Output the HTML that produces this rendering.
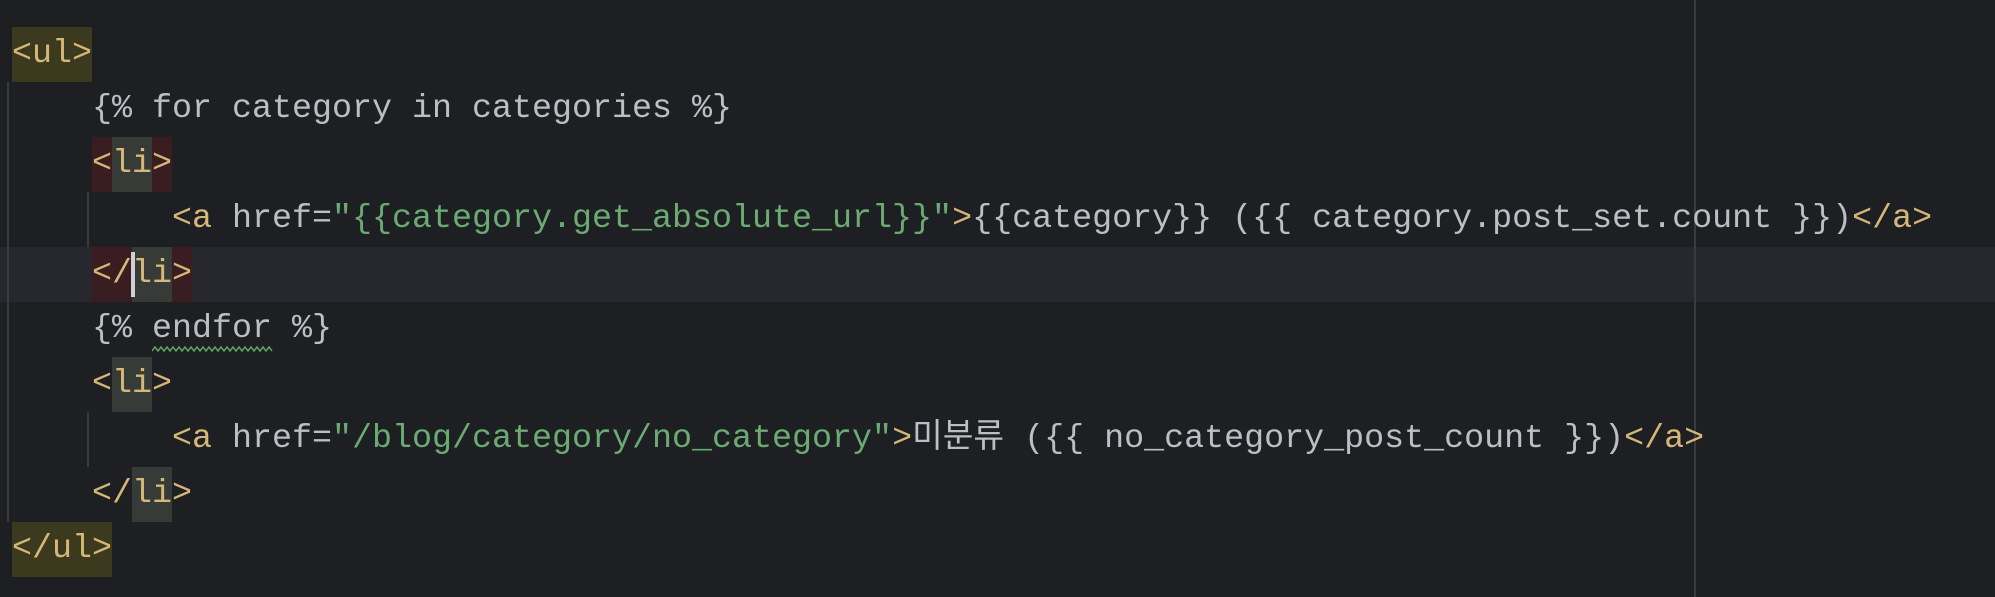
<!DOCTYPE html>
<html><head><meta charset="utf-8"><style>
html,body{margin:0;padding:0;}
body{width:1995px;height:597px;background:#1e1f22;position:relative;overflow:hidden;font-family:"Liberation Mono","Noto Sans CJK KR",monospace;font-size:33.33px;}
.l{position:absolute;left:12px;height:55px;line-height:55px;white-space:pre;color:#bcbec4;}
.b{position:absolute;height:55px;}
.t{color:#d5b778}.s{color:#6aab73}
</style></head><body>
<div class="b" style="left:0;top:247px;width:1995px;background:#26282e"></div>
<div class="b" style="left:1694px;top:0;width:2px;height:597px;background:#393b40"></div>
<div class="b" style="left:7px;top:82px;width:2px;height:440px;background:#393b40"></div>
<div class="b" style="left:87px;top:192px;width:2px;height:55px;background:#393b40"></div>
<div class="b" style="left:87px;top:412px;width:2px;height:55px;background:#393b40"></div>
<div class="b" style="left:12px;top:27px;width:80px;background:#3b3a1f"></div>
<div class="b" style="left:12px;top:522px;width:100px;background:#3b3a1f"></div>
<div class="b" style="left:92px;top:137px;width:80px;background:#3a1d20"></div>
<div class="b" style="left:112px;top:137px;width:40px;background:#373b38"></div>
<div class="b" style="left:92px;top:247px;width:100px;background:#3a1d20"></div>
<div class="b" style="left:132px;top:247px;width:40px;background:#373b38"></div>
<div class="b" style="left:112px;top:357px;width:40px;background:#373b38"></div>
<div class="b" style="left:132px;top:467px;width:40px;background:#373b38"></div>
<div class="b" style="left:131px;top:252px;width:4px;height:45px;background:#ced0d6;z-index:2"></div>
<svg style="position:absolute;left:152px;top:345px" width="122" height="8"><polyline fill="none" stroke="#5fa36a" stroke-width="1.5" points="0,6 3,2 6,6 9,2 12,6 15,2 18,6 21,2 24,6 27,2 30,6 33,2 36,6 39,2 42,6 45,2 48,6 51,2 54,6 57,2 60,6 63,2 66,6 69,2 72,6 75,2 78,6 81,2 84,6 87,2 90,6 93,2 96,6 99,2 102,6 105,2 108,6 111,2 114,6 117,2 120,6"/></svg>
<div class="l" style="top:27px"><span class="t">&lt;ul&gt;</span></div>
<div class="l" style="top:82px">    {% for category in categories %}</div>
<div class="l" style="top:137px">    <span class="t">&lt;li&gt;</span></div>
<div class="l" style="top:192px">        <span class="t">&lt;a</span> href=<span class="s">"{{category.get_absolute_url}}"</span><span class="t">&gt;</span>{{category}} ({{ category.post_set.count }})<span class="t">&lt;/a&gt;</span></div>
<div class="l" style="top:247px">    <span class="t">&lt;/li&gt;</span></div>
<div class="l" style="top:302px">    {% endfor %}</div>
<div class="l" style="top:357px">    <span class="t">&lt;li&gt;</span></div>
<div class="l" style="top:412px">        <span class="t">&lt;a</span> href=<span class="s">"/blog/category/no_category"</span><span class="t">&gt;</span>미분류 ({{ no_category_post_count }})<span class="t">&lt;/a&gt;</span></div>
<div class="l" style="top:467px">    <span class="t">&lt;/li&gt;</span></div>
<div class="l" style="top:522px"><span class="t">&lt;/ul&gt;</span></div>
</body></html>
